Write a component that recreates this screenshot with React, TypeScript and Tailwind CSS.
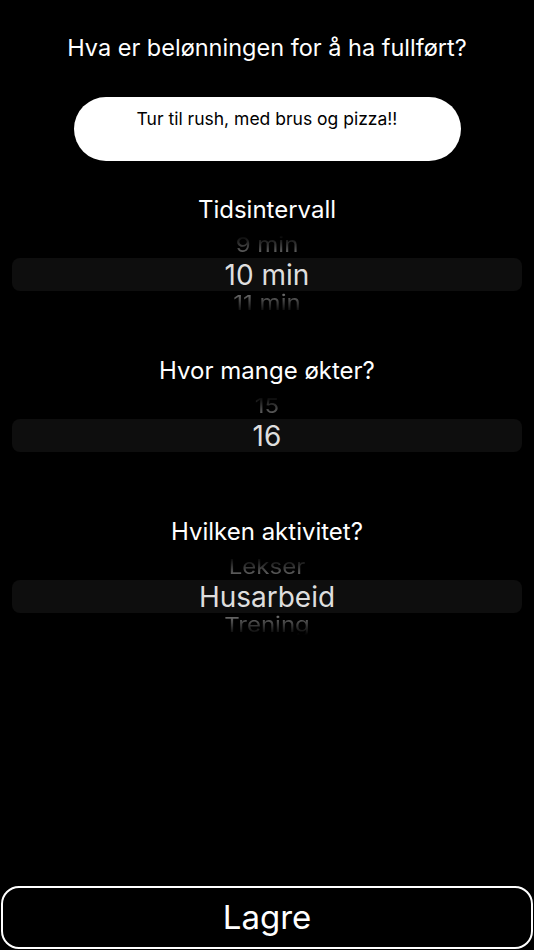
import React from "react";

type PickerProps = {
  prev?: string;
  current: string;
  next?: string;
};

// wheel-style picker: one row either side of the selected value, clipped + faded
const Picker = ({ prev, current, next }: PickerProps) => {
  return (
    <div className="flex w-full flex-col items-center">
      <div className="flex h-[23px] w-full items-end justify-center overflow-hidden pb-[3px] [mask-image:linear-gradient(to_bottom,transparent_0%,black_85%)]">
        <span className="inline-block origin-bottom scale-y-[0.85] text-[24px] leading-none text-[#6a6a6a]">
          {prev ?? "\u00a0"}
        </span>
      </div>
      <div className="flex h-[33px] w-[calc(100%-24px)] items-center justify-center rounded-lg bg-[#0e0e0e] text-[28px] leading-none text-[#dedede]">
        {current}
      </div>
      <div className="flex h-[22px] w-full items-start justify-center overflow-hidden pt-[2px] [mask-image:linear-gradient(to_top,transparent_0%,black_85%)]">
        <span className="inline-block origin-top scale-y-[0.85] text-[24px] leading-none text-[#6a6a6a]">
          {next ?? "\u00a0"}
        </span>
      </div>
    </div>
  );
};

const Section = ({
  label,
  children,
}: {
  label: string;
  children: React.ReactNode;
}) => (
  <div className="flex flex-col items-center">
    <h2 className="flex h-[30px] items-center text-[24px] text-white">{label}</h2>
    <div className="mt-[10px] w-full">{children}</div>
  </div>
);

export default function App() {
  return (
    <div
      className="flex min-h-screen flex-col bg-black text-white"
      style={{ fontFamily: "Inter, 'Noto Sans', sans-serif" }}
    >
      <div className="flex flex-col items-center pt-[33px]">
        <h1 className="flex h-[30px] items-center text-[23.5px] text-white">
          Hva er belønningen for å ha fullført?
        </h1>
        <div className="mt-[34px] flex h-[64px] w-[387px] justify-center rounded-full bg-white pt-[9px] text-[17.5px] text-black">
          Tur til rush, med brus og pizza!!
        </div>
      </div>

      <div className="mt-[34px] flex flex-col gap-[43px]">
        <Section label="Tidsintervall">
          <Picker prev="9 min" current="10 min" next="11 min" />
        </Section>
        <Section label="Hvor mange økter?">
          <Picker prev="15" current="16" />
        </Section>
        <Section label="Hvilken aktivitet?">
          <Picker prev="Lekser" current="Husarbeid" next="Trening" />
        </Section>
      </div>

      <button className="mx-[1px] mb-[1px] mt-auto flex h-[63px] items-center justify-center rounded-[18px] border-2 border-white bg-black text-[33px] text-white">
        Lagre
      </button>
    </div>
  );
}
